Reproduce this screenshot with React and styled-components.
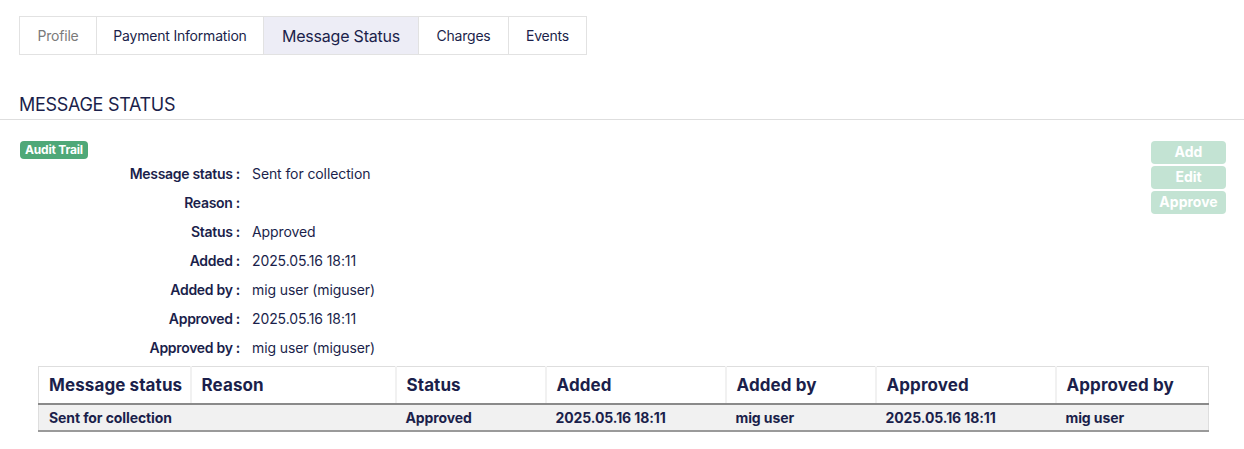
import React from "react";
import styled, { createGlobalStyle } from "styled-components";

const Global = createGlobalStyle`
  html, body { margin: 0; padding: 0; background: #fff; }
  body { font-family: Inter, "Noto Sans", sans-serif; color: #1b1f4b; }
`;

const Page = styled.div`
  width: 1244px;
  height: 449px;
  box-sizing: border-box;
  padding-top: 16px;
  overflow: hidden;
`;

const Tabs = styled.div`
  display: flex;
  margin-left: 19px;
  height: 39px;
  width: max-content;
  border: 1px solid #e2e2e2;
  box-sizing: border-box;
`;

const Tab = styled.div`
  display: flex;
  align-items: center;
  justify-content: center;
  width: ${(p) => p.$w}px;
  box-sizing: border-box;
  border-left: ${(p) => (p.$first ? "none" : "1px solid #e2e2e2")};
  background: ${(p) => (p.$active ? "#ededf6" : "#fff")};
  color: ${(p) => (p.$muted ? "#7a7a7a" : "#1b1f4b")};
  font-size: ${(p) => (p.$active ? 16 : 14)}px;
  letter-spacing: -0.2px;
`;

const Title = styled.h2`
  margin: 40px 0 0;
  padding: 0 19px 4px;
  font-size: 18px;
  font-weight: 400;
  letter-spacing: -0.3px;
  line-height: 20px;
  border-bottom: 1px solid #dedede;
  color: #1b1f4b;
`;

const Body = styled.div`
  padding: 21px 18px 0 20px;
`;

const TopRow = styled.div`
  display: flex;
  justify-content: space-between;
  align-items: flex-start;
`;

const Badge = styled.div`
  width: fit-content;
  background: #4fa878;
  color: #fff;
  font-size: 12px;
  font-weight: 700;
  letter-spacing: -0.2px;
  line-height: 18px;
  height: 18px;
  padding: 0 5px;
  border-radius: 4px;
`;

const Details = styled.div`
  display: grid;
  grid-template-columns: 220px auto;
  column-gap: 12px;
  grid-auto-rows: 29px;
  align-items: center;
  font-size: 14px;
`;

const Label = styled.div`
  text-align: right;
  font-weight: 600;
  letter-spacing: -0.3px;
`;

const Value = styled.div`
  font-weight: 400;
  letter-spacing: -0.1px;
`;

const Buttons = styled.div`
  display: flex;
  flex-direction: column;
  gap: 2px;
`;

const Btn = styled.button`
  width: 75px;
  height: 23px;
  border: none;
  border-radius: 4px;
  background: #c3e3d3;
  color: #fff;
  font-family: inherit;
  font-size: 14px;
  font-weight: 700;
  line-height: 20px;
  padding: 0 0 2px;
`;

const Table = styled.table`
  margin: 4px 0 0 18px;
  width: 1170px;
  border-collapse: collapse;
  table-layout: fixed;
  border: 1px solid #dedede;
  border-bottom: 2px solid #9a9a9a;
`;

const Th = styled.th`
  text-align: left;
  font-size: 17px;
  font-weight: 700;
  letter-spacing: 0.1px;
  height: 36px;
  padding: 0 0 0 10px;
  border-bottom: 2px solid #8a8a8a;
  white-space: nowrap;
  &:not(:first-child) { border-left: 2px solid #f1f1f1; }
`;

const Td = styled.td`
  background: #f1f1f1;
  font-size: 14px;
  font-weight: 700;
  letter-spacing: -0.1px;
  height: 25px;
  padding: 0 0 0 10px;
  white-space: nowrap;
`;

const cols = [152, 205, 150, 180, 150, 180, 153];
const headers = ["Message status", "Reason", "Status", "Added", "Added by", "Approved", "Approved by"];
const row = ["Sent for collection", "", "Approved", "2025.05.16 18:11", "mig user", "2025.05.16 18:11", "mig user"];

const details = [
  ["Message status :", "Sent for collection"],
  ["Reason :", ""],
  ["Status :", "Approved"],
  ["Added :", "2025.05.16 18:11"],
  ["Added by :", "mig user (miguser)"],
  ["Approved :", "2025.05.16 18:11"],
  ["Approved by :", "mig user (miguser)"],
];

export default function App() {
  return (
    <Page>
      <Global />
      <Tabs>
        <Tab $w={76} $first $muted>Profile</Tab>
        <Tab $w={167}>Payment Information</Tab>
        <Tab $w={155} $active>Message Status</Tab>
        <Tab $w={90}>Charges</Tab>
        <Tab $w={78}>Events</Tab>
      </Tabs>
      <Title>MESSAGE STATUS</Title>
      <Body>
        <TopRow>
          <div>
            <Badge>Audit Trail</Badge>
            <Details>
              {details.map(([l, v]) => (
                <React.Fragment key={l}>
                  <Label>{l}</Label>
                  <Value>{v}</Value>
                </React.Fragment>
              ))}
            </Details>
          </div>
          <Buttons>
            <Btn>Add</Btn>
            <Btn>Edit</Btn>
            <Btn>Approve</Btn>
          </Buttons>
        </TopRow>
        <Table>
          <colgroup>
            {cols.map((w, i) => <col key={i} style={{ width: w }} />)}
          </colgroup>
          <thead>
            <tr>{headers.map((h) => <Th key={h}>{h}</Th>)}</tr>
          </thead>
          <tbody>
            <tr>{row.map((c, i) => <Td key={i}>{c}</Td>)}</tr>
          </tbody>
        </Table>
      </Body>
    </Page>
  );
}
